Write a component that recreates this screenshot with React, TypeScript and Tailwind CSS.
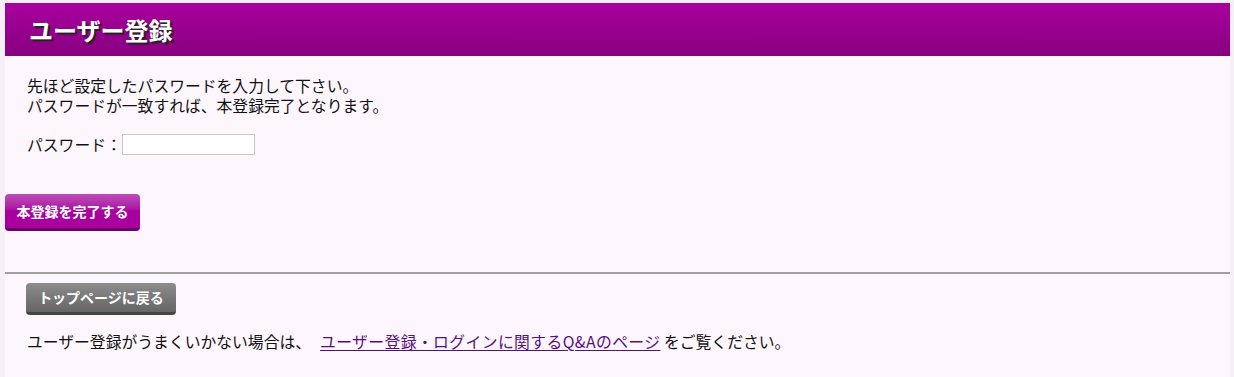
export default function App() {
  const jp = "font-['Hiragino_Kaku_Gothic_ProN','Noto_Sans_CJK_JP',sans-serif]";

  return (
    <div className={`min-h-[377px] w-[1234px] bg-[#f6f0f6] pl-[5px] pt-[3px] text-[#111] ${jp}`}>
      <div className="w-[1225px] min-h-[374px] bg-[#fdf6fd]">
        <div className="flex h-[53px] items-center bg-gradient-to-b from-[#a8009e] to-[#88007f] pl-[24px]">
          <h1 className="text-[24px] font-bold leading-none text-white [text-shadow:2px_2px_1px_#222]">ユーザー登録</h1>
        </div>

        <div className="pl-[22px] pt-[20px] text-[15.8px] leading-[20px]">
          <p>先ほど設定したパスワードを入力して下さい。</p>
          <p>パスワードが一致すれば、本登録完了となります。</p>

          <div className="mt-[18px] flex items-center">
            <span>パスワード：</span>
            <input
              type="password"
              className="h-[21px] w-[133px] border border-[#c8c8c8] bg-white outline-none"
            />
          </div>
        </div>

        <div className="mt-[39px]">
          <button className="h-[37px] w-[135px] rounded-[4px] border-b-[3px] border-[#6b006b] bg-gradient-to-b from-[#bd4cb8] via-[#a8009f] to-[#a8009f] text-[14px] font-bold text-white">
            本登録を完了する
          </button>
        </div>

        <div className="mt-[41px] border-t-2 border-[#a0a0a0]" />

        <div className="pl-[21px] pt-[9px]">
          <button className="h-[32px] w-[150px] rounded-[4px] border-b-[3px] border-[#444] bg-gradient-to-b from-[#8c8c8c] to-[#666] text-[14px] font-bold text-white">
            トップページに戻る
          </button>

          <p className="mt-[17px] pl-px text-[15.8px] leading-[20px]">
            ユーザー登録がうまくいかない場合は、
            <a href="#" className="ml-[9px] tracking-[0.4px] text-[#55107e] underline underline-offset-2">
              ユーザー登録・ログインに関するQ&amp;Aのページ
            </a>{" "}
            をご覧ください。
          </p>
        </div>
      </div>
    </div>
  );
}
